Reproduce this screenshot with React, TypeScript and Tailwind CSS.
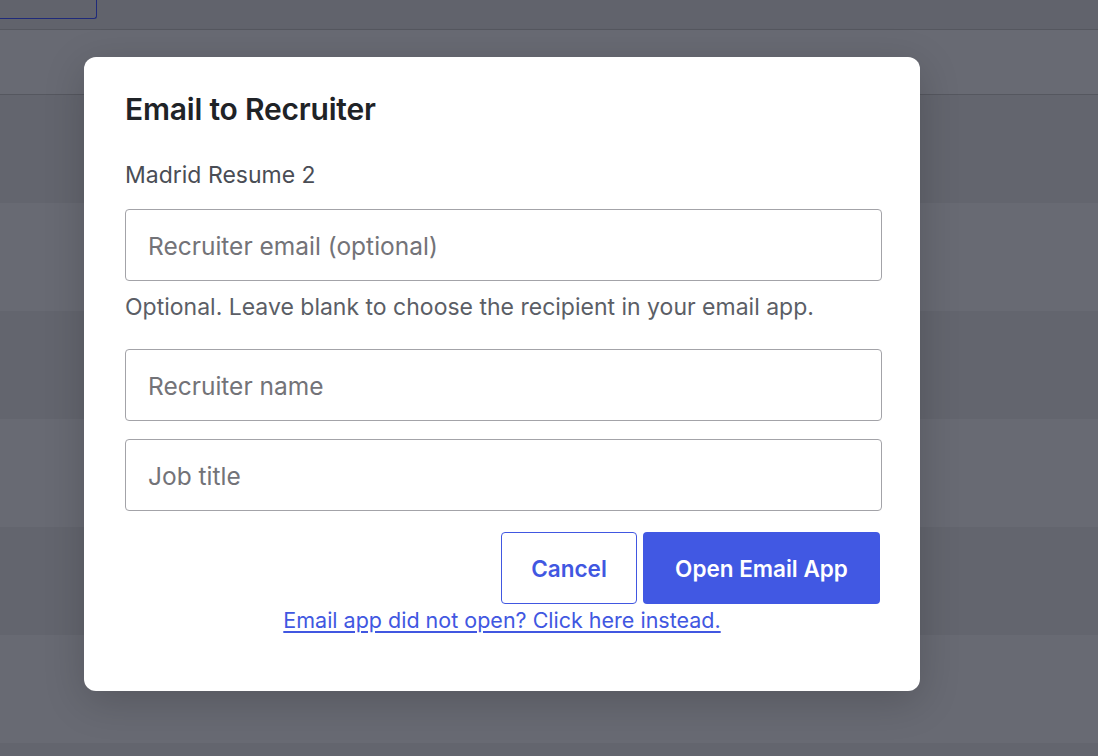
import React from "react";

const font = { fontFamily: "Inter, 'Noto Sans', sans-serif" };

function Field({ placeholder }: { placeholder: string }) {
  return (
    <input
      type="text"
      placeholder={placeholder}
      className="block h-[72px] w-full rounded-[4px] border border-[#a3a3a8] bg-white px-[22px] pt-[2px] text-[24.5px] text-[#1f2937] outline-none placeholder:text-[#737378]"
    />
  );
}

export default function App() {
  const rows = [0, 1, 2, 3, 4, 5, 6];
  return (
    <div className="relative h-[756px] w-[1098px] overflow-hidden bg-[#62646d]" style={font}>
      {/* page behind the overlay */}
      <div className="flex h-[30px] border-b border-[#55575f] bg-[#61636c]">
        <div className="h-[19px] w-[97px] rounded-br-[3px] border-b border-r border-[#1f2a7a]" />
      </div>
      <div className="h-[65px] border-b border-[#55575f] bg-[#686a73]" />
      {rows.map((r) => (
        <div key={r} className={r % 2 === 0 ? "h-[108px] bg-[#63656e]" : "h-[108px] bg-[#686a73]"} />
      ))}

      <div className="absolute left-[84px] top-[57px] w-[836px] rounded-[12px] bg-white pb-[57px] pl-[41px] pr-[38px] pt-[34px] shadow-[0_10px_40px_rgba(0,0,0,0.18)]">
        <h2 className="text-[30px] font-semibold leading-[36px] tracking-[-0.2px] text-[#1f2327]">
          Email to Recruiter
        </h2>
        <p className="mt-[34px] text-[23px] leading-[28px] text-[#4a4d55]">Madrid Resume 2</p>
        <div className="mt-[20px]">
          <Field placeholder="Recruiter email (optional)" />
        </div>
        <p className="mt-[12px] text-[23px] leading-[28px] text-[#5b5e66]">
          Optional. Leave blank to choose the recipient in your email app.
        </p>
        <div className="mt-[28px] flex flex-col gap-[18px]">
          <Field placeholder="Recruiter name" />
          <Field placeholder="Job title" />
        </div>
        <div className="mt-[21px] flex justify-end gap-[6px] pr-[2px]">
          <button className="h-[72px] w-[136px] rounded-[4px] border border-[#4157e1] bg-white pt-[2px] text-[22.5px] font-semibold text-[#4157e1]">
            Cancel
          </button>
          <button className="h-[72px] w-[237px] rounded-[4px] bg-[#4158e3] pt-[2px] text-[22.5px] font-semibold text-white">
            Open Email App
          </button>
        </div>
        <div className="-ml-[41px] -mr-[38px] mt-[2px] text-center">
          <a href="#" className="text-[21.5px] leading-[28px] text-[#4157e1] underline underline-offset-[3px]">
            Email app did not open? Click here instead.
          </a>
        </div>
      </div>
    </div>
  );
}
